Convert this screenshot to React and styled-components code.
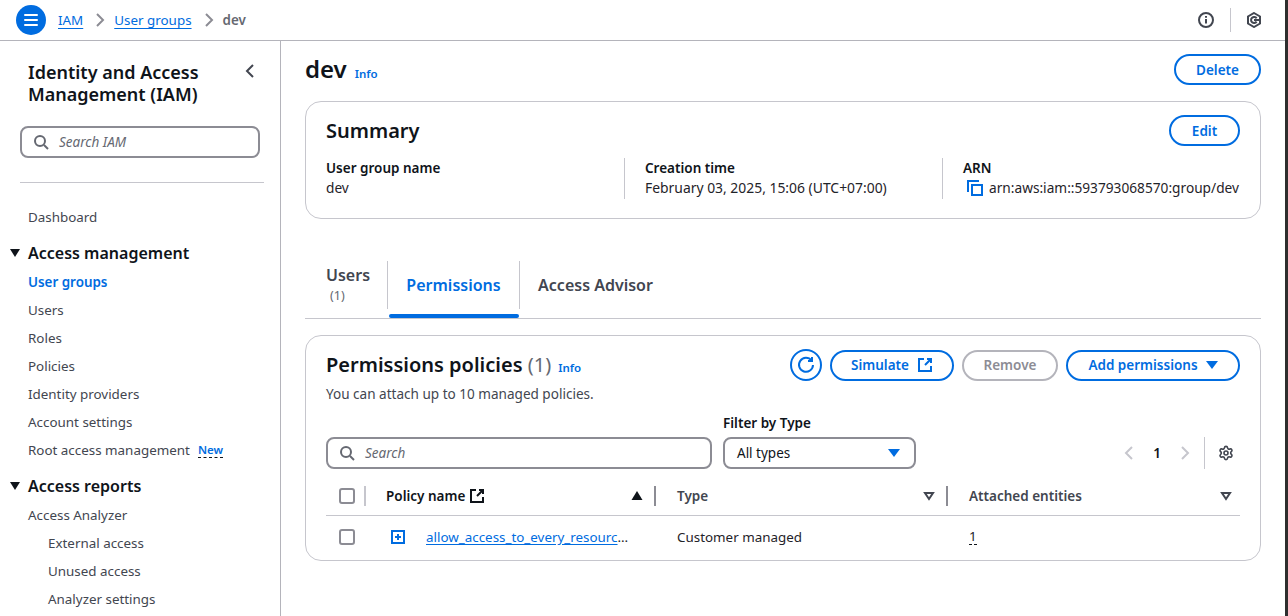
import React from 'react'
import styled, { createGlobalStyle } from 'styled-components'
import { Settings } from 'lucide-react'

const GlobalStyle = createGlobalStyle`
  html, body {
    margin: 0;
    padding: 0;
    height: 616px;
    overflow: hidden;
    background: #fff;
    font-family: "Noto Sans", "Open Sans", sans-serif;
    font-size: 14px;
    color: #0f141a;
  }
  * { box-sizing: border-box; }
`

const Page = styled.div`
  width: 1288px;
  height: 616px;
  display: flex;
  overflow: hidden;
  border-right: 3px solid #2e2e2e;
`

const Column = styled.div`
  flex: 1;
  min-width: 0;
  display: flex;
  flex-direction: column;
`

const TopBar = styled.header`
  height: 41px;
  flex: none;
  display: flex;
  align-items: center;
  padding: 0 23px 0 16px;
  border-bottom: 1px solid #b4b4bb;
`

const MenuButton = styled.div`
  width: 30px;
  height: 30px;
  border-radius: 50%;
  background: #006ce0;
  display: flex;
  flex-direction: column;
  align-items: center;
  justify-content: center;
  gap: 3px;
  margin-right: 12px;

  span {
    width: 14px;
    height: 2px;
    background: #fff;
    border-radius: 1px;
  }
`

const Crumbs = styled.nav`
  display: flex;
  align-items: center;
  flex: 1;
  font-size: 13.4px;
`

const Crumb = styled.a`
  color: #006ce0;
  text-decoration: underline;
  text-underline-offset: 3px;
`

const CrumbSep = styled.svg`
  width: 16px;
  height: 16px;
  margin: 0 6px 0 9px;
  fill: none;
  stroke: #8c8c94;
  stroke-width: 2;
`

const CrumbCurrent = styled.span`
  color: #656871;
  font-weight: 600;
`

const TopIcons = styled.div`
  display: flex;
  align-items: center;
`

const TopDivider = styled.div`
  width: 1px;
  height: 24px;
  background: #c6c6cd;
  margin: 0 15px 0 16px;
`

const Body = styled.div`
  flex: 1;
  display: flex;
  min-height: 0;
`

const Sidebar = styled.aside`
  width: 281px;
  flex: none;
  border-right: 1px solid #b4b4bb;
  overflow: hidden;
  padding: 20px 16px 0 20px;
`

const SideHead = styled.div`
  display: flex;
  justify-content: space-between;
  align-items: flex-start;
  padding-left: 8px;
`

const SideTitle = styled.h2`
  margin: 0;
  font-size: 18px;
  line-height: 22px;
  font-weight: 600;
  color: #0f141a;
`

const Collapse = styled.svg`
  width: 16px;
  height: 16px;
  margin: 2px 6px 0 0;
  fill: none;
  stroke: #424650;
  stroke-width: 2;
`

const SearchBox = styled.div`
  width: ${p => p.$width};
  height: 32px;
  border: 2px solid #8c8c94;
  border-radius: 8px;
  display: flex;
  align-items: center;
  gap: 10px;
  padding-left: 11px;
  flex: none;
  color: #656871;
  font-size: 13.5px;
  font-style: italic;
`

const SideSearch = styled.div`
  margin-top: 21px;
`

const SideRule = styled.hr`
  border: 0;
  border-top: 1px solid #c6c6cd;
  margin: 24px 0 20px;
`

const NavList = styled.div`
  display: flex;
  flex-direction: column;
  padding-left: 8px;
`

const NavLink = styled.a`
  height: 28px;
  display: flex;
  align-items: center;
  gap: 8px;
  font-size: 13.4px;
  white-space: nowrap;
  padding-left: ${p => (p.$sub ? '20px' : '0')};
  color: ${p => (p.$active ? '#006ce0' : '#424650')};
  font-weight: ${p => (p.$active ? 600 : 400)};
`

const NavSection = styled.div`
  position: relative;
  height: 32px;
  display: flex;
  align-items: center;
  font-size: 16px;
  font-weight: 600;
  color: #0f141a;
  margin-top: 6px;
  margin-bottom: -1px;

  &::before {
    content: '';
    position: absolute;
    left: -18px;
    top: 12px;
    border-style: solid;
    border-width: 8px 5px 0 5px;
    border-color: #0f141a transparent transparent transparent;
  }
`

const NewTag = styled.span`
  color: #006ce0;
  font-size: 11.5px;
  font-weight: 600;
  border-bottom: 1px dashed #0f141a;
  line-height: 14px;
`

const Main = styled.main`
  flex: 1;
  min-width: 0;
  padding: 13px 24px 0 24px;
  overflow: hidden;
`

const PageHead = styled.div`
  display: flex;
  justify-content: space-between;
  align-items: flex-start;
  height: 47px;
`

const TitleRow = styled.div`
  display: flex;
  align-items: baseline;
  gap: 8px;
`

const PageTitle = styled.h1`
  margin: 0;
  font-size: 24px;
  line-height: 30px;
  font-weight: 600;
`

const InfoLink = styled.a`
  color: #006ce0;
  font-size: 11.5px;
  font-weight: 600;
`

const Pill = styled.div`
  height: 31px;
  border: 2px solid ${p => (p.$disabled ? '#b4b4bb' : '#006ce0')};
  border-radius: 16px;
  color: ${p => (p.$disabled ? '#8c8c94' : '#006ce0')};
  font-size: 13.5px;
  font-weight: 600;
  display: flex;
  align-items: center;
  justify-content: center;
  gap: 8px;
  width: ${p => p.$width};
  flex: none;
`

const Card = styled.section`
  border: 1px solid #c6c6cd;
  border-radius: 16px;
  padding: 13px 20px 0 20px;
`

const SummaryCard = styled(Card)`
  height: 118px;
`

const CardHead = styled.div`
  display: flex;
  justify-content: space-between;
  align-items: center;
`

const CardTitle = styled.h2`
  margin: 0;
  font-size: 20px;
  line-height: 30px;
  font-weight: 600;
`

const SummaryGrid = styled.div`
  display: grid;
  grid-template-columns: 298px 318px 1fr;
  margin-top: 12px;
`

const SummaryCol = styled.div`
  height: 41px;
  padding-left: ${p => (p.$first ? '0' : '20px')};
  border-left: ${p => (p.$first ? '0' : '1px solid #c6c6cd')};
`

const FieldLabel = styled.div`
  font-size: 13.5px;
  line-height: 20px;
  font-weight: 600;
  color: #0f141a;
`

const FieldValue = styled.div`
  display: flex;
  align-items: center;
  gap: 5px;
  font-size: ${p => p.$size || '13.7px'};
  line-height: 20px;
  color: #1f2329;
  white-space: nowrap;
`

const Tabs = styled.div`
  display: flex;
  align-items: stretch;
  height: 58px;
  margin-top: 42px;
  border-bottom: 1px solid #c6c6cd;
`

const Tab = styled.div`
  position: relative;
  width: ${p => p.$width};
  display: flex;
  flex-direction: column;
  align-items: ${p => (p.$left ? 'flex-start' : 'center')};
  justify-content: center;
  font-size: 16px;
  font-weight: 600;
  line-height: 22px;
  padding-left: ${p => (p.$left ? '21px' : '0')};
  padding-bottom: ${p => (p.$left ? '2px' : '0')};
  color: ${p => (p.$active ? '#006ce0' : '#424650')};
  border-left: ${p => (p.$active ? '1px solid #c6c6cd' : '0')};
  border-right: ${p => (p.$active ? '1px solid #c6c6cd' : '0')};
  margin-bottom: 9px;

  ${p => p.$active && `
    &::after {
      content: '';
      position: absolute;
      left: 1px;
      right: 0;
      bottom: -9px;
      height: 4px;
      border-radius: 2px;
      background: #006ce0;
    }
  `}
`

const TabCount = styled.span`
  font-size: 12.5px;
  line-height: 16px;
  margin-top: 2px;
  font-weight: 400;
  color: #656871;
  margin-left: 4px;
`

const PolicyCard = styled(Card)`
  height: 226px;
  margin-top: 16px;
`

const PolicyHead = styled.div`
  display: flex;
  justify-content: space-between;
  align-items: flex-start;
`

const PolicyTitleRow = styled.div`
  display: flex;
  align-items: baseline;
  gap: 7px;
  margin-top: 1px;
`

const PolicyTitle = styled.h2`
  margin: 0;
  font-size: 20px;
  line-height: 30px;
  font-weight: 600;

  span {
    font-weight: 400;
    color: #656871;
  }
`

const Actions = styled.div`
  display: flex;
  align-items: center;
  gap: 8px;
`

const RoundBtn = styled.div`
  width: 32px;
  height: 32px;
  border: 2px solid #006ce0;
  border-radius: 50%;
  display: flex;
  align-items: center;
  justify-content: center;
`

const Hint = styled.div`
  font-size: 13.55px;
  line-height: 18px;
  color: #424650;
  margin-top: 4px;
`

const FilterRow = styled.div`
  display: flex;
  align-items: flex-end;
  margin-top: 10px;
  gap: 11px;
`

const SelectField = styled.div`
  display: flex;
  flex-direction: column;
  gap: 4px;
`

const SelectBox = styled.div`
  width: 193px;
  height: 32px;
  border: 2px solid #8c8c94;
  border-radius: 8px;
  display: flex;
  align-items: center;
  justify-content: space-between;
  padding: 0 14px 0 12px;
  font-size: 13.5px;
  color: #0f141a;
`

const Caret = styled.span`
  display: inline-block;
  border-style: solid;
  border-width: 8px 6px 0 6px;
  border-color: ${p => p.$color || '#006ce0'} transparent transparent transparent;
`

const Pager = styled.div`
  margin-left: auto;
  height: 32px;
  display: flex;
  align-items: center;
  font-size: 13.5px;
  font-weight: 600;
  color: #0f141a;
  padding-right: 6px;
`

const PagerNum = styled.span`
  margin: 0 16px;
`

const PagerDivider = styled.div`
  width: 1px;
  height: 32px;
  background: #c6c6cd;
  margin: 0 13px 0 11px;
`

const TableGrid = styled.div`
  display: grid;
  grid-template-columns: 40px 290px 292px 1fr;
`

const HeadCell = styled.div`
  position: relative;
  height: 41px;
  margin-top: 6px;
  display: flex;
  align-items: center;
  justify-content: space-between;
  gap: 6px;
  padding: 1px ${p => p.$pr || '8px'} 0 ${p => p.$pl || '0'};
  border-bottom: 1px solid #c6c6cd;
  font-size: 13.5px;
  font-weight: 600;
  color: #424650;

  ${p => p.$bar && `
    &::after {
      content: '';
      position: absolute;
      right: 0;
      top: 11px;
      height: 20px;
      width: 2px;
      background: ${p.$bar};
    }
  `}
`

const HeadLabel = styled.span`
  display: flex;
  align-items: center;
  gap: 4px;
  color: ${p => (p.$dark ? '#0f141a' : '#424650')};
`

const RowCell = styled.div`
  height: 41px;
  display: flex;
  align-items: center;
  font-size: 13.4px;
  color: #1f2329;
  padding-left: ${p => p.$pl || '0'};
`

const Check = styled.div`
  width: 16px;
  height: 16px;
  border: 2px solid #8c8c94;
  border-radius: 3px;
  margin-left: 13px;
`

const PolicyLink = styled.a`
  color: #006ce0;
  text-decoration: underline;
  text-underline-offset: 2px;
  white-space: nowrap;
  margin-left: 21px;
`

const Ellipsis = styled.span`
  color: #1f2329;
  white-space: nowrap;
`

const DottedNum = styled.span`
  border-bottom: 1px dashed #0f141a;
  line-height: 15px;
`

const SearchIcon = () => (
  <svg width="16" height="16" viewBox="0 0 16 16" fill="none" stroke="#656871" strokeWidth="2">
    <circle cx="7" cy="7" r="5" />
    <path d="M11 11l4 4" />
  </svg>
)

const ExternalIcon = ({ color = '#006ce0' }) => (
  <svg width="16" height="16" viewBox="0 0 16 16" fill="none" stroke={color} strokeWidth="2">
    <path d="M7 2H2v12h12V9" />
    <path d="M10 2h4v4M14 2L8 8" />
  </svg>
)

const Chevron = ({ dir, color = '#c6c6cd' }) => (
  <svg width="16" height="16" viewBox="0 0 16 16" fill="none" stroke={color} strokeWidth="2">
    <path d={dir === 'left' ? 'M11 2L5 8l6 6' : 'M5 2l6 6-6 6'} />
  </svg>
)

const SortDown = () => (
  <svg width="12" height="10" viewBox="0 0 12 10" fill="none" stroke="#424650" strokeWidth="2">
    <path d="M2 2h8L6 8z" />
  </svg>
)

const SortUp = () => (
  <svg width="12" height="10" viewBox="0 0 12 10" fill="#0f141a">
    <path d="M6 0l5.5 9H.5z" />
  </svg>
)

const mainNav = ['Users', 'Roles', 'Policies', 'Identity providers', 'Account settings']
const analyzer = ['External access', 'Unused access', 'Analyzer settings']

export default function App() {
  return (
    <Page>
      <GlobalStyle />
      <Column>
        <TopBar>
          <MenuButton><span /><span /><span /></MenuButton>
          <Crumbs>
            <Crumb>IAM</Crumb>
            <CrumbSep viewBox="0 0 16 16"><path d="M5 2l6 6-6 6" /></CrumbSep>
            <Crumb>User groups</Crumb>
            <CrumbSep viewBox="0 0 16 16"><path d="M5 2l6 6-6 6" /></CrumbSep>
            <CrumbCurrent>dev</CrumbCurrent>
          </Crumbs>
          <TopIcons>
            <svg width="16" height="16" viewBox="0 0 16 16" fill="none" stroke="#424650" strokeWidth="2">
              <circle cx="8" cy="8" r="7" />
              <path d="M8 7v4.5M8 4v1.8" />
            </svg>
            <TopDivider />
            <svg width="16" height="16" viewBox="0 0 16 16" fill="none" stroke="#424650" strokeWidth="2">
              <path d="M8 1l6 3.5v7L8 15l-6-3.5v-7z" />
              <path d="M10.6 6.4a3 3 0 1 0 0 3.2" />
              <path d="M8 8h5" />
            </svg>
          </TopIcons>
        </TopBar>
        <Body>
          <Sidebar>
            <SideHead>
              <SideTitle>Identity and Access<br />Management (IAM)</SideTitle>
              <Collapse viewBox="0 0 16 16"><path d="M11 2L5 8l6 6" /></Collapse>
            </SideHead>
            <SideSearch>
              <SearchBox $width="240px"><SearchIcon />Search IAM</SearchBox>
            </SideSearch>
            <SideRule />
            <NavList>
              <NavLink>Dashboard</NavLink>
              <NavSection>Access management</NavSection>
              <NavLink $active>User groups</NavLink>
              {mainNav.map(n => <NavLink key={n}>{n}</NavLink>)}
              <NavLink>Root access management <NewTag>New</NewTag></NavLink>
              <NavSection>Access reports</NavSection>
              <NavLink>Access Analyzer</NavLink>
              {analyzer.map(n => <NavLink key={n} $sub>{n}</NavLink>)}
            </NavList>
          </Sidebar>
          <Main>
            <PageHead>
              <TitleRow>
                <PageTitle>dev</PageTitle>
                <InfoLink>Info</InfoLink>
              </TitleRow>
              <Pill $width="87px">Delete</Pill>
            </PageHead>
            <SummaryCard>
              <CardHead>
                <CardTitle>Summary</CardTitle>
                <Pill $width="71px">Edit</Pill>
              </CardHead>
              <SummaryGrid>
                <SummaryCol $first>
                  <FieldLabel>User group name</FieldLabel>
                  <FieldValue>dev</FieldValue>
                </SummaryCol>
                <SummaryCol>
                  <FieldLabel>Creation time</FieldLabel>
                  <FieldValue $size="13.9px">February 03, 2025, 15:06 (UTC+07:00)</FieldValue>
                </SummaryCol>
                <SummaryCol>
                  <FieldLabel>ARN</FieldLabel>
                  <FieldValue>
                    <svg width="18" height="18" viewBox="0 0 18 18" fill="none" stroke="#006ce0" strokeWidth="2" style={{ marginLeft: 3 }}>
                      <path d="M2 13V2h11" />
                      <rect x="6" y="6" width="10" height="10" />
                    </svg>
                    arn:aws:iam::593793068570:group/dev
                  </FieldValue>
                </SummaryCol>
              </SummaryGrid>
            </SummaryCard>
            <Tabs>
              <Tab $left $width="82px">Users<TabCount>(1)</TabCount></Tab>
              <Tab $active $width="133px">Permissions</Tab>
              <Tab $width="151px">Access Advisor</Tab>
            </Tabs>
            <PolicyCard>
              <PolicyHead>
                <PolicyTitleRow>
                  <PolicyTitle>Permissions policies <span>(1)</span></PolicyTitle>
                  <InfoLink>Info</InfoLink>
                </PolicyTitleRow>
                <Actions>
                  <RoundBtn>
                    <svg width="18" height="18" viewBox="0 0 18 18" fill="none" stroke="#006ce0" strokeWidth="2">
                      <path d="M14.5 4.5A7 7 0 1 0 16 9" />
                      <path d="M15 1v4h-4" />
                    </svg>
                  </RoundBtn>
                  <Pill $width="124px">Simulate <ExternalIcon /></Pill>
                  <Pill $disabled $width="96px">Remove</Pill>
                  <Pill $width="174px">Add permissions <Caret /></Pill>
                </Actions>
              </PolicyHead>
              <Hint>You can attach up to 10 managed policies.</Hint>
              <FilterRow>
                <SearchBox $width="386px"><SearchIcon />Search</SearchBox>
                <SelectField>
                  <FieldLabel>Filter by Type</FieldLabel>
                  <SelectBox>All types <Caret /></SelectBox>
                </SelectField>
                <Pager>
                  <Chevron dir="left" />
                  <PagerNum>1</PagerNum>
                  <Chevron dir="right" />
                  <PagerDivider />
                  <Settings size={16} color="#424650" strokeWidth={2.4} />
                </Pager>
              </FilterRow>
              <TableGrid>
                <HeadCell $bar="#c6c6cd"><Check /></HeadCell>
                <HeadCell $bar="#8c8c94" $pl="20px" $pr="13px">
                  <HeadLabel $dark>Policy name <ExternalIcon color="#0f141a" /></HeadLabel>
                  <SortUp />
                </HeadCell>
                <HeadCell $bar="#8c8c94" $pl="21px" $pr="13px">Type <SortDown /></HeadCell>
                <HeadCell $pl="21px" $pr="8px">Attached entities <SortDown /></HeadCell>
                <RowCell><Check /></RowCell>
                <RowCell $pl="25px">
                  <svg width="14" height="14" viewBox="0 0 14 14" fill="none" stroke="#006ce0" strokeWidth="2">
                    <rect x="1" y="1" width="12" height="12" />
                    <path d="M4 7h6M7 4v6" />
                  </svg>
                  <PolicyLink>allow_access_to_every_resourc</PolicyLink>
                  <Ellipsis>…</Ellipsis>
                </RowCell>
                <RowCell $pl="21px">Customer managed</RowCell>
                <RowCell $pl="21px"><DottedNum>1</DottedNum></RowCell>
              </TableGrid>
            </PolicyCard>
          </Main>
        </Body>
      </Column>
    </Page>
  )
}
